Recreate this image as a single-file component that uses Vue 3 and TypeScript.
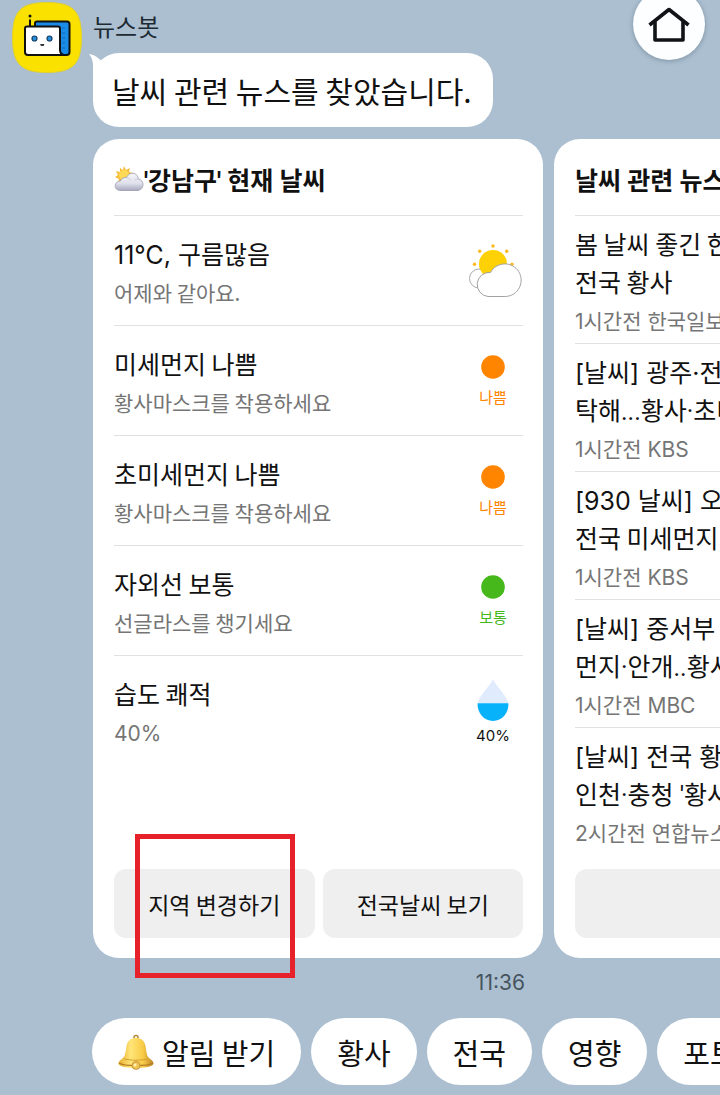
<script setup lang="ts">
interface Reading {
  title: string
  note: string
  kind: 'cloud' | 'dot' | 'drop'
  label?: string
  tone?: 'bad' | 'normal' | 'plain'
}

interface Article {
  lines: string[]
  meta: string
}

const readings: Reading[] = [
  { title: '11℃, 구름많음', note: '어제와 같아요.', kind: 'cloud' },
  { title: '미세먼지 나쁨', note: '황사마스크를 착용하세요', kind: 'dot', label: '나쁨', tone: 'bad' },
  { title: '초미세먼지 나쁨', note: '황사마스크를 착용하세요', kind: 'dot', label: '나쁨', tone: 'bad' },
  { title: '자외선 보통', note: '선글라스를 챙기세요', kind: 'dot', label: '보통', tone: 'normal' },
  { title: '습도 쾌적', note: '40%', kind: 'drop', label: '40%', tone: 'plain' },
]

const articles: Article[] = [
  { lines: ['봄 날씨 좋긴 한데', '전국 황사'], meta: '1시간전 한국일보' },
  { lines: ['[날씨] 광주·전남', '탁해...황사·초미세먼지'], meta: '1시간전 KBS' },
  { lines: ['[930 날씨] 오늘', '전국 미세먼지'], meta: '1시간전 KBS' },
  { lines: ['[날씨] 중서부 중심', '먼지·안개..황사'], meta: '1시간전 MBC' },
  { lines: ['[날씨] 전국 황사', "인천·충청 '황사"], meta: '2시간전 연합뉴스' },
]

const topics: string[] = ['황사', '전국', '영향', '포토']

const face = (text: string): string => {
  if (/[0-9A-Z[]/.test(text)) return 'latin'
  return /[·']/.test(text) ? 'narrow' : 'hangul'
}
</script>

<template>
  <main class="chat">
    <button class="home" type="button" aria-label="홈">
      <svg width="42" height="36" viewBox="0 0 42 36" fill="none" stroke="#111416" stroke-linejoin="round">
        <path d="M1.500 19 21 3.500 40.500 19" stroke-width="3.600" />
        <path d="M7 15.500V34h28V15.500" stroke-width="3.600" />
      </svg>
    </button>

    <section class="message">
      <svg class="avatar" width="70" height="71" viewBox="0 0 70 71" role="img" aria-label="뉴스봇">
        <path d="M35 .5C61 .5 69.500 9 69.500 35.500S61 70.500 35 70.500.5 62 .5 35.500 9 .5 35 .5Z" fill="#fbe100" stroke="#dfd02c" />
        <path d="M18 24V17.500" stroke="#111" stroke-width="2" />
        <circle cx="18" cy="14" r="1.500" fill="#111" />
        <path d="M23 24v-2.500q0-2 2-2H55q2.500 0 2.500 2.500v28q0 3-3 3h-7z" fill="#1b8be8" stroke="#111" stroke-width="2" stroke-linejoin="round" />
        <path d="M50 26h3M50 31h3M50 36h3M50 41h3M50 46h3" stroke="#126bb8" stroke-width="1" />
        <path d="M15 24.500h31q2 0 2 2V48q0 4 4 5H16q-3 0-3-3V26.500q0-2 2-2Z" fill="#fff" stroke="#111" stroke-width="2" stroke-linejoin="round" />
        <circle cx="22.500" cy="36.500" r="2.500" fill="#238edc" stroke="#173e66" stroke-width="1.200" />
        <circle cx="37.500" cy="36.500" r="2.500" fill="#238edc" stroke="#173e66" stroke-width="1.200" />
        <path d="M28.500 42.800q1.800 1.200 3.600 0Z" fill="#111" stroke="#111" />
      </svg>
      <div class="speech">
        <div class="sender">뉴스봇</div>
        <p class="bubble">
          <svg class="tail" width="24" height="24" viewBox="0 0 24 24" aria-hidden="true">
            <path d="M0 1q5 0 11.500 6L16 22 4 24V12Q4 6 0 1Z" fill="#fff" />
          </svg>
          날씨 관련 뉴스를 찾았습니다.
        </p>
      </div>
    </section>

    <section class="carousel">
      <article class="card">
        <h2 class="heading">
          <svg width="30" height="26" viewBox="0 0 30 26" aria-hidden="true">
            <defs>
              <linearGradient id="puff" x1="0" y1="0" x2="0" y2="1">
                <stop offset="0" stop-color="#f6f6fa" />
                <stop offset=".6" stop-color="#dedfea" />
                <stop offset="1" stop-color="#a7a8bd" />
              </linearGradient>
            </defs>
            <path d="m10 0 2 4 4-2-1 4 4 1-3 3-1 6-11 1 1-4-4-2 3-2-2-4 4 1 0-4 3 2z" fill="#f5bd3b" />
            <circle cx="10" cy="9" r="5" fill="#ffda57" />
            <path d="M7 24.500C2.500 24.500 1 22 1.200 19.500c.2-3 2.800-4.500 5-4.500C7.500 12.300 10 11 12.500 11.500 14 8.300 17 6.500 20 7.500c3 .8 4.300 3 4.300 5.500C27.500 13.500 29 16 29 18.500c0 3.500-2.500 6-6 6Z" fill="url(#puff)" stroke="#9b9bae" stroke-width=".8" />
            <path d="M12.500 11.500q2.500.5 4 2.500M24.300 13q-2-.4-3.500 1" fill="none" stroke="#c2c3d2" stroke-width=".8" />
          </svg>
          <div><span class="narrow">'강남구' 현재 날씨</span></div>
        </h2>
        <ul class="list">
          <li v-for="item in readings" :key="item.title" class="reading">
            <div class="words">
              <div class="title"><span :class="face(item.title)">{{ item.title }}</span></div>
              <div class="note"><span :class="face(item.note)">{{ item.note }}</span></div>
            </div>
            <div class="status" :class="[item.kind, item.tone]">
              <svg v-if="item.kind === 'cloud'" width="55" height="54" viewBox="0 0 55 54" aria-hidden="true">
                <circle cx="11" cy="34.500" r="9.500" fill="#fff" stroke="#a9a9a9" />
                <circle cx="25" cy="20" r="14" fill="#fdd105" />
                <g fill="#fbb91c">
                  <circle cx="25" cy="2" r="1.700" />
                  <circle cx="11.700" cy="7.200" r="1.700" />
                  <circle cx="38.700" cy="7.200" r="1.700" />
                  <circle cx="6.500" cy="20.200" r="1.700" />
                  <circle cx="44" cy="20.200" r="1.700" />
                </g>
                <path d="M20 52.500A12 12 0 1 1 22.500 28.500 16.300 16.300 0 1 1 37.500 52.500Z" fill="#fff" stroke="#a2a2a2" />
              </svg>
              <svg v-else-if="item.kind === 'dot'" width="24" height="24" viewBox="0 0 24 24" aria-hidden="true">
                <circle cx="12" cy="12" r="11.800" fill="currentColor" />
              </svg>
              <svg v-else width="32" height="42" viewBox="0 0 32 42" aria-hidden="true">
                <path d="M16 0C18 5 26 13 29.500 19.500Q31 22 31.300 24.500H.7Q1 22 2.500 19.500C6 13 14 5 16 0Z" fill="#e0ecfd" />
                <path d="M.6 24.300h30.800C32 34 25 42 16 42S0 34 .6 24.300Z" fill="#08b2fb" />
              </svg>
              <span v-if="item.label" class="label"><span :class="face(item.label)">{{ item.label }}</span></span>
            </div>
          </li>
        </ul>
        <div class="actions">
          <div class="marked">
            <button class="action" type="button">지역 변경하기</button>
            <span class="frame" aria-hidden="true"></span>
          </div>
          <button class="action" type="button">전국날씨 보기</button>
        </div>
      </article>

      <article class="card">
        <h2 class="heading">
          <div><span class="narrow">날씨 관련 뉴스</span></div>
        </h2>
        <ul class="list">
          <li v-for="(item, i) in articles" :key="i" class="news">
            <div v-for="line in item.lines" :key="line" class="line"><span :class="face(line)">{{ line }}</span></div>
            <div class="meta"><span :class="face(item.meta)">{{ item.meta }}</span></div>
          </li>
        </ul>
        <div class="actions">
          <button class="action" type="button">더보기</button>
        </div>
      </article>
    </section>

    <time class="time"><span class="latin">11:36</span></time>

    <nav class="chips">
      <button class="chip" type="button">
        <svg width="36" height="36" viewBox="0 0 36 36" aria-hidden="true">
          <defs>
            <linearGradient id="brass" x1="0" y1="0" x2="1" y2="0">
              <stop offset="0" stop-color="#e7ad2e" />
              <stop offset=".35" stop-color="#ffe578" />
              <stop offset=".7" stop-color="#f8cb45" />
              <stop offset="1" stop-color="#bd8526" />
            </linearGradient>
          </defs>
          <circle cx="18" cy="3.500" r="2" fill="none" stroke="#b58a39" stroke-width="1.500" />
          <path d="M18 4C23 4 26.500 6.500 27.500 12c1 6 1.200 9.500 3.500 12 2 2 4.500 3 4.500 5.500C35.500 32.500 27 34 18 34S.5 32.500.5 29.500C.5 27 3 26 5 24c2.300-2.500 2.500-6 3.500-12C9.500 6.500 13 4 18 4Z" fill="url(#brass)" />
          <path d="M1 29c5 3.500 29 3.500 34 0" fill="none" stroke="#b47b25" stroke-width="1.200" />
          <path d="M5.500 24.500c6 2.300 19 2.300 25 0" fill="none" stroke="#d69f31" />
          <circle cx="18" cy="31.500" r="4" fill="#eec454" stroke="#b58131" stroke-width=".7" />
          <circle cx="17" cy="31" r="1.500" fill="#fff1b3" />
        </svg>
        <span>알림 받기</span>
      </button>
      <button v-for="topic in topics" :key="topic" class="chip" type="button">{{ topic }}</button>
    </nav>
  </main>
</template>

<style>
body {
  margin: 0;
  background: #abbfd0;
}
</style>

<style scoped>
.chat {
  position: relative;
  box-sizing: border-box;
  min-height: 100vh;
  padding-bottom: 10px;
  overflow: hidden;
  background: #abbfd0;
  color: #111;
  font-family: "Noto Sans CJK KR", sans-serif;
  white-space: nowrap;
}

button {
  border: 0;
  padding: 0;
  color: inherit;
  font-family: inherit;
  white-space: nowrap;
}

.latin {
  font-family: Inter, "Noto Sans CJK KR", sans-serif;
  line-height: 1;
}

.narrow {
  font-family: Roboto, "Noto Sans CJK KR", sans-serif;
  line-height: 1;
}

.home {
  position: absolute;
  top: -12px;
  right: 15px;
  display: flex;
  align-items: center;
  justify-content: center;
  width: 72px;
  height: 72px;
  border-radius: 50%;
  background: #fcfeff;
  box-shadow: 0 1px 5px rgba(40, 60, 80, 0.35);
}

.message {
  display: flex;
  gap: 11px;
  padding: 2px 0 0 12px;
}

.avatar {
  flex: none;
}

.speech {
  display: flex;
  flex-direction: column;
  align-items: flex-start;
  gap: 9px;
  padding-top: 6px;
}

.sender {
  color: #1d2a33;
  font-size: 24px;
  line-height: 36px;
}

.bubble {
  position: relative;
  margin: 0;
  padding: 16px 21px 16px 19px;
  border-radius: 26px;
  background: #fff;
  font-size: 30px;
  line-height: 42px;
}

.tail {
  position: absolute;
  top: 0;
  left: -4px;
}

.carousel {
  display: flex;
  gap: 11px;
  padding: 12px 0 0 93px;
}

.card {
  display: flex;
  flex: none;
  flex-direction: column;
  box-sizing: border-box;
  width: 450px;
  padding: 0 20px 20px 21px;
  border-radius: 26px;
  background: #fff;
}

.heading {
  display: flex;
  align-items: center;
  margin: 0;
  padding: 22px 0 18px;
  border-bottom: 1px solid #e1e1e1;
  font-size: 25px;
  font-weight: 700;
  line-height: 36px;
}

.list {
  margin: 0;
  padding: 0;
  list-style: none;
}

.reading {
  display: flex;
  justify-content: space-between;
  border-bottom: 1px solid #e1e1e1;
}

.reading:last-child,
.news:last-child {
  border-bottom: 0;
}

.words {
  padding: 19px 0 18px;
}

.title {
  font-size: 25px;
  line-height: 36px;
}

.note {
  margin-top: 6px;
  color: #757575;
  font-size: 21px;
  line-height: 30px;
}

.status {
  display: flex;
  flex-direction: column;
  align-items: center;
  width: 60px;
  padding-top: 29px;
  gap: 8px;
}

.cloud {
  align-items: flex-end;
  padding-top: 28px;
}

.drop {
  padding-top: 23px;
  gap: 4px;
}

.label {
  font-size: 15px;
  line-height: 20px;
}

.bad {
  color: #ff8500;
}

.normal {
  color: #46b81c;
}

.plain {
  color: #111;
}

.news {
  padding: 8px 0;
  border-bottom: 1px solid #e1e1e1;
}

.line {
  font-size: 25px;
  line-height: 38px;
}

.meta {
  margin-top: 5px;
  color: #757575;
  font-size: 21px;
  line-height: 30px;
}

.actions {
  display: flex;
  gap: 8px;
  margin-top: auto;
}

.list + .actions {
  padding-top: 14px;
}

.marked {
  position: relative;
  display: flex;
  flex: 1;
}

.action {
  flex: 1;
  height: 69px;
  border-radius: 12px;
  background: #efefef;
  font-size: 23px;
  line-height: 32px;
}

.frame {
  position: absolute;
  top: -35px;
  right: 20px;
  bottom: -40px;
  left: 21px;
  border: 5px solid #e62129;
  pointer-events: none;
}

.time {
  display: block;
  width: 432px;
  margin-left: 93px;
  padding: 8px 0 22px;
  color: #46545f;
  font-size: 21px;
  line-height: 30px;
  text-align: right;
}

.chips {
  display: flex;
  gap: 10px;
  padding-left: 92px;
}

.chip {
  display: flex;
  flex: none;
  align-items: center;
  gap: 8px;
  height: 67px;
  padding: 0 26px;
  border-radius: 34px;
  background: #fff;
  font-size: 29px;
  line-height: 36px;
}
</style>
